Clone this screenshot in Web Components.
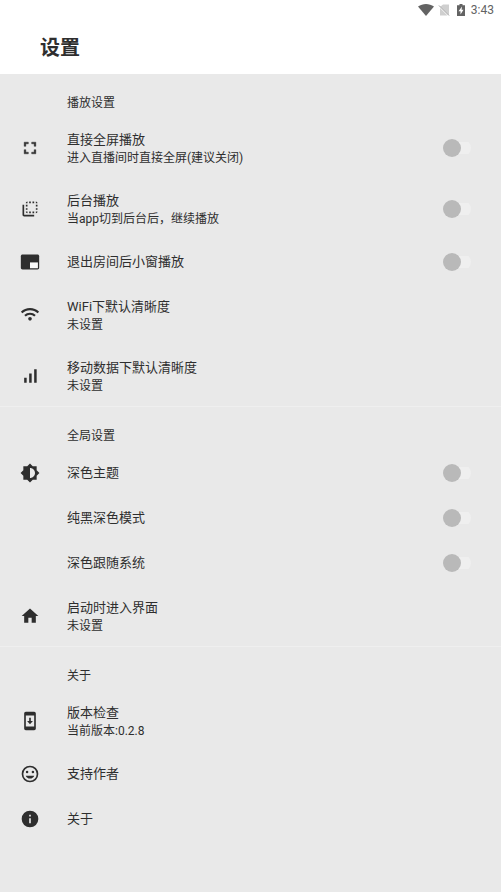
<!DOCTYPE html>
<html lang="zh-CN">
<head>
<meta charset="utf-8">
<meta name="viewport" content="width=device-width, initial-scale=1">
<title>设置</title>
<style>
html, body { margin: 0; min-height: 100%; background: #e9e9e9; }
body { font-family: Roboto, "Noto Sans CJK SC", sans-serif; color: #2e2e2e; }
</style>
</head>
<body>
<settings-page></settings-page>
<script>
const ICONS = {
  fullscreen: '<path d="M7 14H5v5h5v-2H7v-3zm-2-4h2V7h3V5H5v5zm12 7h-3v2h5v-5h-2v3zM14 5v2h3v3h2V5h-5z" stroke="currentColor" stroke-width=".5"/>',
  layers: '<path d="M9 7H7v2h2V7zm0 4H7v2h2v-2zm0-8c-1.11 0-2 .9-2 2h2V3zm4 12h-2v2h2v-2zm6-12v2h2c0-1.1-.9-2-2-2zm-6 0h-2v2h2V3zM9 17v-2H7c0 1.1.89 2 2 2zm10-4h2v-2h-2v2zm0-4h2V7h-2v2zm0 8c1.1 0 2-.9 2-2h-2v2zM5 7H3v12c0 1.1.89 2 2 2h12v-2H5V7zm10-2h2V3h-2v2zm0 12h2v-2h-2v2z"/>',
  pip: '<path d="M21 3H3c-1.1 0-2 .9-2 2v14c0 1.1.9 2 2 2h18c1.1 0 2-.9 2-2V5c0-1.1-.9-2-2-2z"/><path fill="#fafafa" d="M12 12.500h9.500v7H12z"/>',
  wifi: '<g fill="none" stroke="currentColor" stroke-width="2.600"><path d="M2 9.100a14.200 14.200 0 0 1 20 0M6 13a8.500 8.500 0 0 1 12 0"/></g><circle cx="12" cy="16.600" r="2.200"/>',
  signal: '<path d="M17 4h3v16h-3zM5 14h3v6H5zm6-5h3v11h-3z"/>',
  theme: '<path d="M20 15.310L23.310 12 20 8.690V4h-4.690L12 .69 8.690 4H4v4.690L.69 12 4 15.310V20h4.690L12 23.310 15.310 20H20v-4.690zM12 18V6c3.310 0 6 2.690 6 6s-2.690 6-6 6z"/>',
  home: '<path d="M10 20v-6h4v6h5v-8h3L12 3 2 12h3v8z"/>',
  update: '<path d="M17 1H7c-1.100 0-2 .9-2 2v18c0 1.100.9 2 2 2h10c1.100 0 2-.9 2-2V3c0-1.100-.9-2-2-2zm0 17.500H7v-13h10v13zM15.500 12H13V8h-2v4H8.500l3.500 3.800z"/>',
  smile: '<path d="M12 2a10 10 0 1 0 0 20 10 10 0 0 0 0-20zm0 18a8 8 0 1 1 0-16 8 8 0 0 1 0 16zm3.500-9a1.500 1.500 0 1 0 0-3 1.500 1.500 0 0 0 0 3zm-7 0a1.500 1.500 0 1 0 0-3 1.500 1.500 0 0 0 0 3zm3.500 6.500c2.330 0 4.310-1.460 5.110-3.500H6.890c.8 2.040 2.780 3.500 5.110 3.500z"/>',
  info: '<path d="M12 2a10 10 0 1 0 0 20 10 10 0 0 0 0-20zm1 15h-2v-6h2v6zm0-8h-2V7h2v2z"/>'
};

class StatusBar extends HTMLElement {
  connectedCallback() {
    this.attachShadow({ mode: 'open' }).innerHTML = `
      <style>
        :host { display: flex; justify-content: flex-end; align-items: center; height: 20px; padding-right: 7px; color: #636363; font-size: 12px; line-height: 20px; }
        svg { display: block; fill: currentColor; }
        .wifi { margin-right: 4px; } .sim { margin-right: 7px; } .battery { margin-right: 6px; }
      </style>
      <svg class="wifi" width="16" height="12" viewBox="0 0 16 12"><path d="M8 12 0 2.600C4.800-.8 11.200-.8 16 2.600z"/></svg>
      <svg class="sim" width="12" height="12" viewBox="0 0 12 12"><path fill="#cfcfcf" d="M5 .5h6V11L2.500 2.500zM2 4v7.500h7.500z"/><path d="M1 1.500l10 10" stroke="#9a9a9a" stroke-width="1"/></svg>
      <svg class="battery" width="8" height="12" viewBox="0 0 8 12"><path d="M2.500 0h3v1.200H8V12H0V1.200h2.500z"/><path fill="#fff" d="M5 2.500 1.500 7.200h2v3.300l3-4.700H4.600z"/></svg>
      <span>3:43</span>`;
  }
}

class AppHeader extends HTMLElement {
  connectedCallback() {
    this.attachShadow({ mode: 'open' }).innerHTML = `
      <style>
        :host { display: block; background: #fff; }
        h1 { margin: 0; padding: 13px 40px 11px; font-size: 20px; line-height: 30px; font-weight: 700; }
      </style>
      <status-bar></status-bar><h1><slot></slot></h1>`;
  }
}

class SettingsGroup extends HTMLElement {
  connectedCallback() {
    this.attachShadow({ mode: 'open' }).innerHTML = `
      <style>
        :host { display: block; }
        :host(:not(:last-of-type)) { border-bottom: 1px solid #efefef; }
        h2 { margin: 0; padding: 20px 24px 5px 67px; font-size: 12px; line-height: 18px; font-weight: 400; }
      </style>
      <section><h2>${this.getAttribute('heading')}</h2><slot></slot></section>`;
  }
}

class SettingsItem extends HTMLElement {
  connectedCallback() {
    const icon = ICONS[this.getAttribute('icon')];
    const summary = this.getAttribute('summary');
    const toggle = this.hasAttribute('toggle');
    const tag = toggle ? 'label' : 'button';
    this.attachShadow({ mode: 'open' }).innerHTML = `
      <style>
        :host { display: block; }
        .row { box-sizing: border-box; width: 100%; min-height: 45px; display: grid; grid-template-columns: 20px 1fr auto; column-gap: 27px; align-items: center; padding: 12px 30px 12px 20px; margin: 0; border: 0; background: none; color: inherit; font: inherit; text-align: left; cursor: pointer; }
        svg { display: block; width: 20px; height: 20px; fill: currentColor; }
        .text { grid-column: 2; }
        .title, .summary { display: block; }
        .title { font-size: 13px; line-height: 21px; }
        .summary { font-size: 12px; line-height: 16px; }
        input { appearance: none; display: flex; align-items: center; width: 28px; height: 18px; margin: 0; border-radius: 9px; cursor: pointer;
          background: linear-gradient(#efefef, #efefef) right center / 20px 12px no-repeat; }
        input::before { content: ""; width: 18px; height: 18px; border-radius: 50%; background: #b9b9b9; }
        input:checked { justify-content: flex-end; }
        input:checked::before { background: #555; }
      </style>
      <${tag} class="row">
        ${icon ? `<svg viewBox="0 0 24 24" aria-hidden="true">${icon}</svg>` : ''}
        <span class="text"><span class="title"><slot></slot></span>${summary ? `<span class="summary">${summary}</span>` : ''}</span>
        ${toggle ? '<input type="checkbox" role="switch">' : ''}
      </${tag}>`;
  }
}

class SettingsPage extends HTMLElement {
  connectedCallback() {
    this.attachShadow({ mode: 'open' }).innerHTML = `
      <style>:host { display: block; }</style>
      <app-header>设置</app-header>
      <main>
        <settings-group heading="播放设置">
          <settings-item icon="fullscreen" summary="进入直播间时直接全屏(建议关闭)" toggle>直接全屏播放</settings-item>
          <settings-item icon="layers" summary="当app切到后台后，继续播放" toggle>后台播放</settings-item>
          <settings-item icon="pip" toggle>退出房间后小窗播放</settings-item>
          <settings-item icon="wifi" summary="未设置">WiFi下默认清晰度</settings-item>
          <settings-item icon="signal" summary="未设置">移动数据下默认清晰度</settings-item>
        </settings-group>
        <settings-group heading="全局设置">
          <settings-item icon="theme" toggle>深色主题</settings-item>
          <settings-item toggle>纯黑深色模式</settings-item>
          <settings-item toggle>深色跟随系统</settings-item>
          <settings-item icon="home" summary="未设置">启动时进入界面</settings-item>
        </settings-group>
        <settings-group heading="关于">
          <settings-item icon="update" summary="当前版本:0.2.8">版本检查</settings-item>
          <settings-item icon="smile">支持作者</settings-item>
          <settings-item icon="info">关于</settings-item>
        </settings-group>
      </main>`;
  }
}

customElements.define('status-bar', StatusBar);
customElements.define('app-header', AppHeader);
customElements.define('settings-item', SettingsItem);
customElements.define('settings-group', SettingsGroup);
customElements.define('settings-page', SettingsPage);
</script>
</body>
</html>
